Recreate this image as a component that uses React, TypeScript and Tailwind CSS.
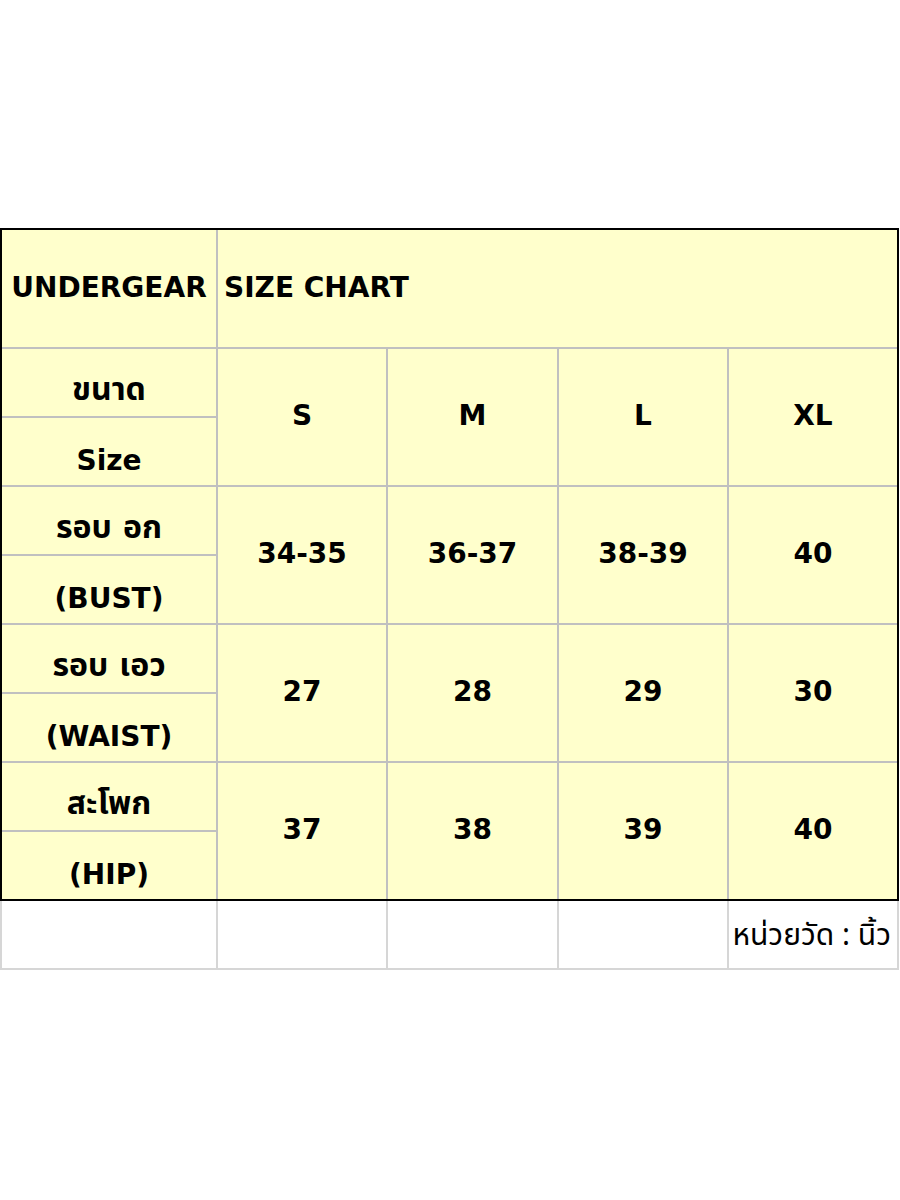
import React from "react";

const cellFont = { fontFamily: '"DejaVu Sans", "Noto Sans Thai", "Noto Sans", sans-serif' };

interface Measure {
  th: string;
  en: string;
  values: string[];
}

const rows: Measure[] = [
  { th: "ขนาด", en: "Size", values: ["S", "M", "L", "XL"] },
  { th: "รอบ อก", en: "(BUST)", values: ["34-35", "36-37", "38-39", "40"] },
  { th: "รอบ เอว", en: "(WAIST)", values: ["27", "28", "29", "30"] },
  { th: "สะโพก", en: "(HIP)", values: ["37", "38", "39", "40"] },
];

const Label: React.FC<{ text: string; thai?: boolean }> = ({ text, thai }) => (
  <div
    className={
      thai
        ? "bg-[#ffffcc] flex items-end justify-center pb-[11px] text-[32px] leading-none font-bold text-black"
        : "bg-[#ffffcc] flex items-end justify-center pb-[10px] text-[28px] leading-none font-bold text-black"
    }
  >
    {text}
  </div>
);

export default function App() {
  return (
    <div className="min-h-[1200px] bg-white" style={cellFont}>
      <div className="pt-[228px] w-[899px]">
        {/* yellow chart */}
        <div className="grid grid-cols-[214px_168px_169px_168px_168px] grid-rows-[117px_repeat(8,67px)] gap-[2px] bg-[#c0c0c0] border-2 border-black">
          <div className="bg-[#ffffcc] flex items-center justify-center pb-[2px] text-[28px] font-bold text-black">
            UNDERGEAR
          </div>
          <div className="col-span-4 bg-[#ffffcc] flex items-center pl-[6px] pb-[2px] text-[28px] font-bold text-black">
            SIZE CHART
          </div>
          {rows.map((r, i) => (
            <React.Fragment key={i}>
              <Label text={r.th} thai />
              {r.values.map((v, j) => (
                <div
                  key={j}
                  className="row-span-2 bg-[#ffffcc] flex items-center justify-center pb-[3px] text-[28px] font-bold text-black"
                >
                  {v}
                </div>
              ))}
              <Label text={r.en} />
            </React.Fragment>
          ))}
        </div>

        {/* unit row */}
        <div className="grid grid-cols-[214px_168px_169px_168px_168px] h-[69px] gap-[2px] px-[2px] pb-[2px] bg-[#d6d6d6]">
          <div className="bg-white" />
          <div className="bg-white" />
          <div className="bg-white" />
          <div className="bg-white" />
          <div
            className="bg-white flex items-center justify-end pr-[6px] pt-[4px] text-[30px] text-black whitespace-nowrap"
            style={{ fontFamily: '"Noto Sans Thai", Tahoma, "DejaVu Sans", sans-serif' }}
          >
            หน่วยวัด : นิ้ว
          </div>
        </div>
      </div>
    </div>
  );
}
